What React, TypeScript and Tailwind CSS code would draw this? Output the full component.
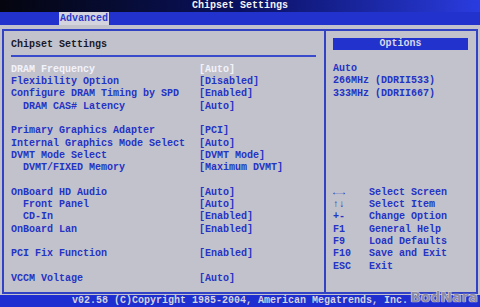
import React from "react";

const rows: { label: string; value: string; indent?: boolean; active?: boolean }[] = [
  { label: "DRAM Frequency", value: "[Auto]", active: true },
  { label: "Flexibility Option", value: "[Disabled]" },
  { label: "Configure DRAM Timing by SPD", value: "[Enabled]" },
  { label: "DRAM CAS# Latency", value: "[Auto]", indent: true },
  { label: "", value: "" },
  { label: "Primary Graphics Adapter", value: "[PCI]" },
  { label: "Internal Graphics Mode Select", value: "[Auto]" },
  { label: "DVMT Mode Select", value: "[DVMT Mode]" },
  { label: "DVMT/FIXED Memory", value: "[Maximum DVMT]", indent: true },
  { label: "", value: "" },
  { label: "OnBoard HD Audio", value: "[Auto]" },
  { label: "Front Panel", value: "[Auto]", indent: true },
  { label: "CD-In", value: "[Enabled]", indent: true },
  { label: "OnBoard Lan", value: "[Enabled]" },
  { label: "", value: "" },
  { label: "PCI Fix Function", value: "[Enabled]" },
  { label: "", value: "" },
  { label: "VCCM Voltage", value: "[Auto]" },
];

const keys = [
  ["←→", "Select Screen"],
  ["↑↓", "Select Item"],
  ["+-", "Change Option"],
  ["F1", "General Help"],
  ["F9", "Load Defaults"],
  ["F10", "Save and Exit"],
  ["ESC", "Exit"],
];

export default function App() {
  return (
    <div className="relative w-[480px] h-[307px] flex flex-col overflow-hidden bg-[#c2c2cc] font-['Liberation_Mono',monospace] font-bold text-[10px] leading-[12.3px]">
      {/* title bar */}
      <div className="h-[12px] flex items-center justify-center bg-gradient-to-r from-[#05050f] via-[#0a1060] to-[#2a3ce0] text-[#f4f4f8]">
        Chipset Settings
      </div>
      {/* tab bar */}
      <div className="h-[13px] flex items-center bg-[#2232cc] pl-[59px]">
        <span className="bg-[#d4d4de] text-[#2a3ac8] h-[13px] px-[1px] leading-[13px]">Advanced</span>
      </div>

      {/* main panel */}
      <div className="flex-1 pt-[4px] px-[2px] pb-[1px]">
        <div className="h-full flex border-2 border-[#3242c4]">
          {/* left */}
          <div className="w-[322px] pl-[7px] pr-[8px] border-r-2 border-[#3242c4]">
            <div className="mt-[8px] text-[#181828]">Chipset Settings</div>
            <div className="mt-[4px] h-[1.5px] bg-[#3a4acc]" />
            <div className="mt-[7px]">
              {rows.map((r, i) => (
                <div key={i} className="flex h-[12.3px]">
                  <span
                    className={`w-[188px] whitespace-pre ${r.indent ? "pl-[12px]" : ""} ${
                      r.active ? "text-[#f2f2fa]" : "text-[#2434c4]"
                    }`}
                  >
                    {r.label}
                  </span>
                  <span className={`whitespace-pre ${r.active ? "text-[#f2f2fa]" : "text-[#2434c4]"}`}>{r.value}</span>
                </div>
              ))}
            </div>
          </div>

          {/* right */}
          <div className="flex-1 pl-[7px] pr-[8px]">
            <div className="mt-[7px] h-[12px] bg-[#2232cc] text-[#d8d8e8] text-center leading-[12px]">Options</div>
            <div className="mt-[13px] text-[#2434c4]">
              <div>Auto</div>
              <div>266MHz (DDRII533)</div>
              <div>333MHz (DDRII667)</div>
            </div>
            <div className="mt-[87px] text-[#2434c4]">
              {keys.map(([k, d]) => (
                <div key={k} className="flex h-[12.3px]">
                  <span className="w-[36px]">{k}</span>
                  <span>{d}</span>
                </div>
              ))}
            </div>
          </div>
        </div>
      </div>

      {/* footer */}
      <div className="h-[12px] bg-[#1e2ed0] text-[#d4d4e0] text-center leading-[12px]">
        v02.58 (C)Copyright 1985-2004, American Megatrends, Inc.
      </div>

      {/* watermark */}
      <div className="absolute right-[2px] bottom-[2px] font-['DejaVu_Sans',sans-serif] font-bold text-[14px] leading-[15px] text-[#8c8ca4] [text-shadow:0_0_1px_#ffffff,0_0_1px_#ffffff]">
        BodNara
      </div>
    </div>
  );
}
